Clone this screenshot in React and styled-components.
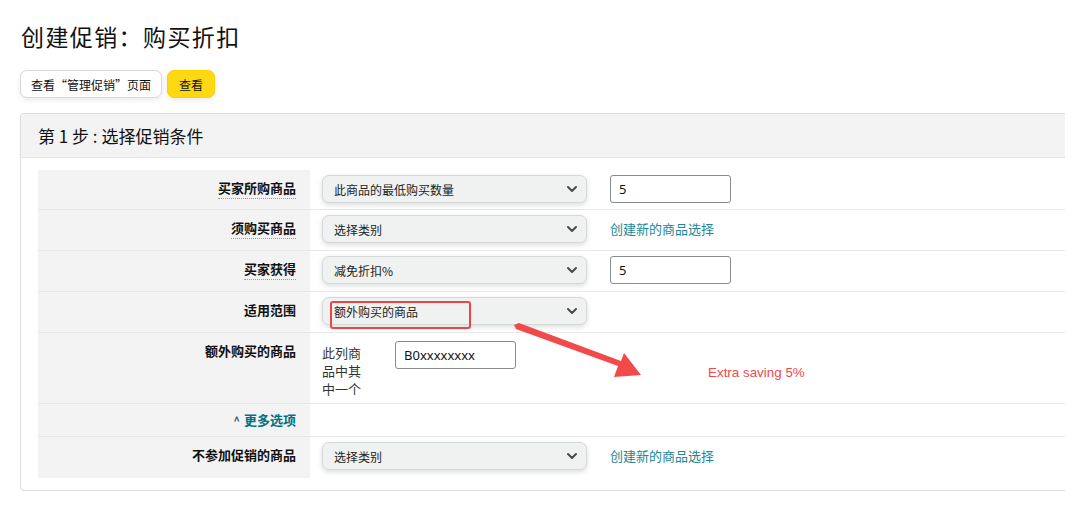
import React from "react";
import styled, { createGlobalStyle } from "styled-components";

const GlobalStyle = createGlobalStyle`
  html, body {
    margin: 0;
    padding: 0;
    background: #fff;
  }
  body {
    font-family: "Noto Sans CJK SC", "Noto Sans", Arial, sans-serif;
    color: #0f1111;
    width: 1080px;
    height: 519px;
    overflow: hidden;
  }
`;

const Page = styled.div`
  position: relative;
  padding: 19px 0 0 20px;
`;

const Title = styled.h1`
  margin: 0 0 0 1px;
  font-size: 23px;
  font-weight: 400;
  line-height: 34px;
  color: #111;
  letter-spacing: 1.4px;
`;

const ButtonRow = styled.div`
  display: flex;
  gap: 5px;
  margin-top: 17px;
`;

const Button = styled.button`
  height: 28px;
  padding: 0 ${(p) => (p.$primary ? "11px" : "10px")};
  border-radius: 7px;
  border: 1px solid ${(p) => (p.$primary ? "#fcd200" : "#d5d9d9")};
  background: ${(p) => (p.$primary ? "#ffd814" : "#fff")};
  box-shadow: 0 2px 5px rgba(213, 217, 217, 0.5);
  font-family: inherit;
  font-size: 12px;
  color: #0f1111;
  cursor: pointer;
`;

const Panel = styled.div`
  margin-top: 15px;
  width: 1044px;
  border: 1px solid #dddddd;
  border-right: none;
  border-radius: 4px 0 0 4px;
  padding-bottom: 12px;
`;

const PanelHeader = styled.div`
  height: 43px;
  background: #f3f3f3;
  border-bottom: 1px solid #e3e3e3;
  display: flex;
  align-items: center;
  padding-left: 17px;
  font-size: 17px;
  color: #111;
`;

const Table = styled.div`
  margin: 12px 0 0 17px;
  display: grid;
  grid-template-columns: 272px 1fr;
`;

const Label = styled.div`
  background: #f3f3f3;
  height: ${(p) => p.$h}px;
  box-sizing: border-box;
  border-bottom: ${(p) => (p.$last ? "none" : "1px solid #e8e8e8")};
  padding: ${(p) => p.$top ?? 8}px 14px 0 0;
  text-align: right;
  font-size: 13px;
  font-weight: 700;
  color: #111;
`;

const Help = styled.span`
  border-bottom: 1px dotted #999;
  padding-bottom: 1px;
`;

const MoreLink = styled.span`
  color: #007185;
  &::before {
    content: "^";
    color: #555;
    font-size: 11px;
    margin-right: 4px;
  }
`;

const Value = styled.div`
  height: ${(p) => p.$h}px;
  box-sizing: border-box;
  border-bottom: ${(p) => (p.$last ? "none" : "1px solid #e8e8e8")};
  padding: ${(p) => p.$top ?? 5}px 0 0 12px;
  display: flex;
  align-items: flex-start;
`;

const SelectBox = styled.div`
  position: relative;
  width: 265px;
  height: 28px;
  box-sizing: border-box;
  border-radius: 7px;
  border: 1px solid #d5d9d9;
  background: #f0f2f2;
  box-shadow: 0 2px 5px rgba(15, 17, 17, 0.15);
  display: flex;
  align-items: center;
  justify-content: space-between;
  padding: 0 8px 0 11px;
  font-size: 12px;
  color: #222;
`;

const Highlight = styled.div`
  position: absolute;
  left: 7px;
  top: 3px;
  width: 141px;
  height: 28px;
  box-sizing: border-box;
  border: 2px solid #ec4545;
  border-radius: 3px;
`;

const TextInput = styled.div`
  width: 121px;
  height: 28px;
  box-sizing: border-box;
  border: 1px solid #888c8c;
  border-radius: 3px;
  background: #fff;
  margin-left: ${(p) => p.$ml ?? 23}px;
  padding-left: 8px;
  display: flex;
  align-items: center;
  font-size: 13px;
  color: #111;
  font-family: "Noto Sans", Arial, sans-serif;
`;

const CreateLink = styled.span`
  margin-left: 23px;
  line-height: 28px;
  font-size: 13px;
  color: #1e8694;
`;

const NarrowText = styled.div`
  width: 40px;
  font-size: 13px;
  line-height: 18px;
  color: #333;
  margin-top: 3px;
`;

const Saving = styled.span`
  align-self: center;
  margin: 0 0 0 192px;
  padding-top: 0;
  font-family: Arial, "Liberation Sans", sans-serif;
  font-size: 13.4px;
  color: #f2474c;
`;

const Arrow = styled.svg`
  position: absolute;
  left: 510px;
  top: 320px;
  pointer-events: none;
`;

const Chevron = () => (
  <svg width="12" height="8" viewBox="0 0 12 8">
    <path d="M2 2 L6 6 L10 2" fill="none" stroke="#4a4a4a" strokeWidth="2" strokeLinecap="round" strokeLinejoin="round" />
  </svg>
);

function Select({ children, mark }) {
  return (
    <SelectBox>
      {mark && <Highlight />}
      <span>{children}</span>
      <Chevron />
    </SelectBox>
  );
}

export default function App() {
  return (
    <Page>
      <GlobalStyle />
      <Title>创建促销：购买折扣</Title>
      <ButtonRow>
        <Button>查看“管理促销”页面</Button>
        <Button $primary>查看</Button>
      </ButtonRow>
      <Panel>
        <PanelHeader>第 1 步 : 选择促销条件</PanelHeader>
        <Table>
          <Label $h={40}><Help>买家所购商品</Help></Label>
          <Value $h={40}>
            <Select>此商品的最低购买数量</Select>
            <TextInput>5</TextInput>
          </Value>

          <Label $h={41}><Help>须购买商品</Help></Label>
          <Value $h={41}>
            <Select>选择类别</Select>
            <CreateLink>创建新的商品选择</CreateLink>
          </Value>

          <Label $h={41}><Help>买家获得</Help></Label>
          <Value $h={41}>
            <Select>减免折扣%</Select>
            <TextInput>5</TextInput>
          </Value>

          <Label $h={41}>适用范围</Label>
          <Value $h={41}>
            <Select mark>额外购买的商品</Select>
          </Value>

          <Label $h={71}>额外购买的商品</Label>
          <Value $h={71} $top={8}>
            <NarrowText>此列商品中其中一个</NarrowText>
            <TextInput $ml={33}>B0xxxxxxxx</TextInput>
            <Saving>Extra saving 5%</Saving>
          </Value>

          <Label $h={33} $top={6}><MoreLink>更多选项</MoreLink></Label>
          <Value $h={33} />

          <Label $h={41} $last>不参加促销的商品</Label>
          <Value $h={41} $last>
            <Select>选择类别</Select>
            <CreateLink>创建新的商品选择</CreateLink>
          </Value>
        </Table>
      </Panel>
      <Arrow width="140" height="64" viewBox="0 0 140 64">
        <path d="M4 5 L6 9 L108 46 L104 57 L131 55 L114 33 L111 41 L9 3 Z" fill="#f24a4a" />
      </Arrow>
    </Page>
  );
}
